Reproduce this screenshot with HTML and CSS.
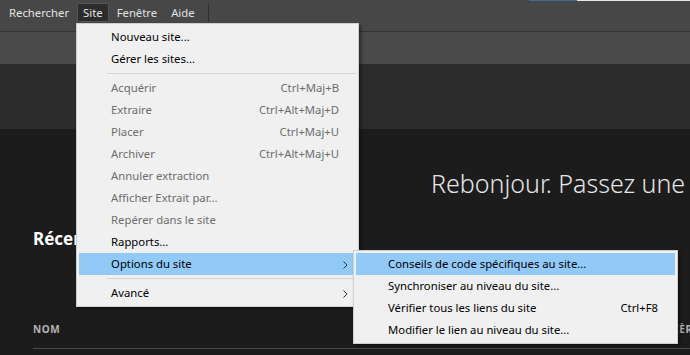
FILE: index.html
```html
<!DOCTYPE html>
<html lang="fr">
<head>
<meta charset="UTF-8">
<title>Dreamweaver - Site</title>
<link rel="stylesheet" href="styles.css">
</head>
<body>
<div id="appWrapper">
  <!-- Window edge -->
  <div class="topline">
    <span class="topline-gap"></span>
    <span class="topline-blue"></span>
    <span class="topline-white"></span>
  </div>

  <!-- Menu bar -->
  <div class="menubar">
    <span class="menu-item">Rechercher</span>
    <span class="menu-item active">Site
      <div class="dropdown">
        <div class="dd-item">Nouveau site...</div>
        <div class="dd-item">Gérer les sites...</div>
        <div class="dd-sep"></div>
        <div class="dd-item disabled">Acquérir<span class="shortcut">Ctrl+Maj+B</span></div>
        <div class="dd-item disabled">Extraire<span class="shortcut">Ctrl+Alt+Maj+D</span></div>
        <div class="dd-item disabled">Placer<span class="shortcut">Ctrl+Maj+U</span></div>
        <div class="dd-item disabled">Archiver<span class="shortcut">Ctrl+Alt+Maj+U</span></div>
        <div class="dd-item disabled">Annuler extraction</div>
        <div class="dd-item disabled">Afficher Extrait par...</div>
        <div class="dd-item disabled">Repérer dans le site</div>
        <div class="dd-item">Rapports...</div>
        <div class="dd-item hover has-sub">Options du site
          <svg class="chev" width="5" height="8" viewBox="0 0 5 8"><polyline points="0.5,0.5 4,4 0.5,7.5" fill="none" stroke="#333" stroke-width="1"/></svg>
          <div class="submenu">
            <div class="dd-item hover">Conseils de code spécifiques au site...</div>
            <div class="dd-item">Synchroniser au niveau du site...</div>
            <div class="dd-item">Vérifier tous les liens du site<span class="shortcut">Ctrl+F8</span></div>
            <div class="dd-item">Modifier le lien au niveau du site...</div>
          </div>
        </div>
        <div class="dd-sep"></div>
        <div class="dd-item has-sub">Avancé
          <svg class="chev" width="5" height="8" viewBox="0 0 5 8"><polyline points="0.5,0.5 4,4 0.5,7.5" fill="none" stroke="#333" stroke-width="1"/></svg>
        </div>
      </div>
    </span>
    <span class="menu-item">Fenêtre</span>
    <span class="menu-item">Aide</span>
    <span class="menu-divider"></span>
  </div>

  <!-- Toolbar -->
  <div class="toolbar"></div>

  <!-- Banner -->
  <div class="banner"></div>

  <!-- Home screen -->
  <div class="home">
    <div class="greeting">Rebonjour. Passez une bonne journée.</div>
    <div class="recent-title">Récents</div>
    <div class="table-head">
      <span class="col-name">NOM</span>
      <span class="col-date">DERNIÈRE OUVERTURE</span>
    </div>
  </div>
</div>
</body>
</html>
```

FILE: styles.css
```css
:root {
  --bar:#474747;
  --tool:#4a4a4a;
  --band:#2b2b2b;
  --bg:#1c1c1c;
  --menu:#f0f0f0;
  --hover:#91c9f7;
  --muted:#6d6d6d;
}

html, body {
  margin:0; padding:0;
  width:690px; height:355px;
  overflow:hidden;
  background:var(--bg);
  font-family:"Noto Sans", "Segoe UI", sans-serif;
}

#appWrapper {
  display:flex; flex-direction:column;
  height:100%;
  overflow:hidden;
}

/* Window edge */
.topline {display:flex; height:1px; background:var(--bar);}
.topline-gap {width:529px;}
.topline-blue {width:48px; background:#3e6b9a;}
.topline-white {flex:1; background:#e8e8e8;}

/* Menu bar */
.menubar {
  display:flex; align-items:flex-start;
  height:28px;
  padding:2px 0 0 3px;
  background:var(--bar);
  border-bottom:1px solid #353535;
  font-size:11.3px;
  color:#e2e2e2;
  position:relative;
  z-index:10;
}
.menu-item {
  position:relative;
  height:19px; line-height:18px;
  padding:0 5px;
  margin-right:2px;
  border:1px solid transparent;
  box-sizing:border-box;
}
.menu-item.active {background:#2c2c2c; border-color:#555; border-radius:2px;}
.menu-divider {width:1px; height:19px; background:#303030; margin-left:5px;}

/* Dropdown */
.dropdown {
  position:absolute; left:-2px; top:19px;
  width:283px;
  box-sizing:border-box;
  padding:2px;
  background:var(--menu);
  border:1px solid #cfcfcf;
  box-shadow:2px 2px 3px rgba(0,0,0,0.45);
  color:#000;
  line-height:22px;
}
.dd-item {
  position:relative;
  display:flex; justify-content:space-between;
  height:22px;
  padding:0 17px 0 32px;
  white-space:nowrap;
}
.dd-item.disabled {color:var(--muted);}
.dd-item.hover {background:var(--hover);}
.dd-sep {height:1px; background:#d4d4d4; margin:3px 0 3px 28px;}
.chev {position:absolute; right:8px; top:8px;}

/* Submenu */
.submenu {
  position:absolute; left:274px; top:-3px;
  width:325px;
  box-sizing:border-box;
  padding:2px;
  background:var(--menu);
  border:1px solid #cfcfcf;
  box-shadow:2px 2px 3px rgba(0,0,0,0.45);
}
.submenu .dd-item {padding-right:17px;}

/* Toolbar + banner */
.toolbar {height:32px; background:var(--tool);}
.banner {height:65px; background:var(--band);}

/* Home */
.home {flex:1; padding:0 0 0 33px; color:#fff; overflow:hidden;}
.greeting {
  margin:39px 0 0 398px;
  font-size:25px; font-weight:300; line-height:30px;
  color:#e6e6e6;
  white-space:nowrap;
}
.recent-title {margin-top:30px; font-size:17px; font-weight:700; line-height:22px;}
.table-head {
  display:flex; justify-content:space-between;
  margin-top:72px;
  padding-bottom:12px;
  border-bottom:1px solid #4a4a4a;
  font-size:10px; font-weight:700; line-height:14px;
  letter-spacing:0.6px;
  color:#b4b4b4;
  white-space:nowrap;
}
.col-date {margin-right:-77px;}
```
